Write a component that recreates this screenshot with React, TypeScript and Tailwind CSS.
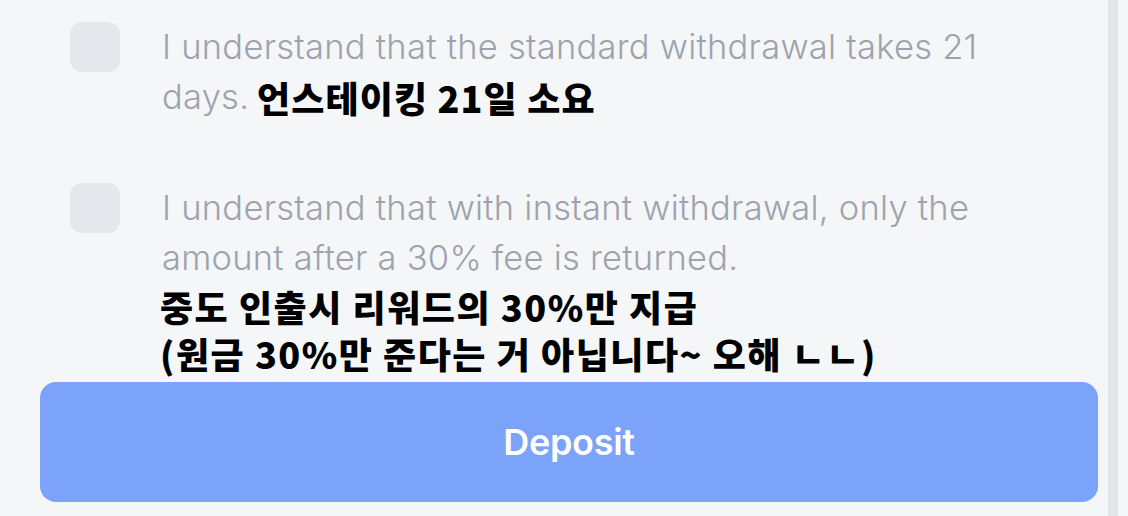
import React from "react";

export default function App() {
  return (
    <div className="w-[1128px] h-[516px] bg-[#f5f6f8] flex overflow-hidden">
      <div className="w-[1108px] pl-[40px] pr-[10px] flex flex-col">
        <div className="flex mt-[22px] pl-[30px]">
          <div className="w-[50px] h-[50px] rounded-[12px] bg-[#e4e7eb] shrink-0" />
          <div className="ml-[42px] w-[840px] text-[34.5px] leading-[50px] font-light text-[#9da3ad] tracking-[0.25px] [font-family:Inter,sans-serif]">
            I understand that the standard withdrawal takes 21 days.{" "}
            <span className="inline-block align-top h-[50px] leading-[50px] -ml-[2px] text-[36px] font-black text-black tracking-[1.1px] [font-family:'Noto_Sans_CJK_KR',sans-serif]">
              언스테이킹 21일 소요
            </span>
          </div>
        </div>
        <div className="flex mt-[61px] pl-[30px]">
          <div className="w-[50px] h-[50px] rounded-[12px] bg-[#e4e7eb] shrink-0" />
          <div className="ml-[42px] flex flex-col">
            <div className="w-[840px] text-[34.5px] leading-[50px] font-light text-[#9da3ad] tracking-[0.25px] [font-family:Inter,sans-serif]">
              I understand that with instant withdrawal, only the amount after a 30% fee is returned.
            </div>
            <div className="-ml-[2px] text-[36px] leading-[47px] font-black text-black tracking-[1.5px] [font-family:'Noto_Sans_CJK_KR',sans-serif]">
              중도 인출시 리워드의 30%만 지급
              <br />
              (원금 30%만 준다는 거 아닙니다~ 오해 ㄴㄴ)
            </div>
          </div>
        </div>
        <button className="mt-[5px] h-[120px] w-[1058px] rounded-[16px] bg-[#7ba3f9] text-white text-[36px] font-semibold tracking-[-0.3px] [font-family:Inter,sans-serif]">
          Deposit
        </button>
      </div>
      <div className="w-[10px] h-full bg-[#e2e5ea]" />
      <div className="w-[10px]" />
    </div>
  );
}
